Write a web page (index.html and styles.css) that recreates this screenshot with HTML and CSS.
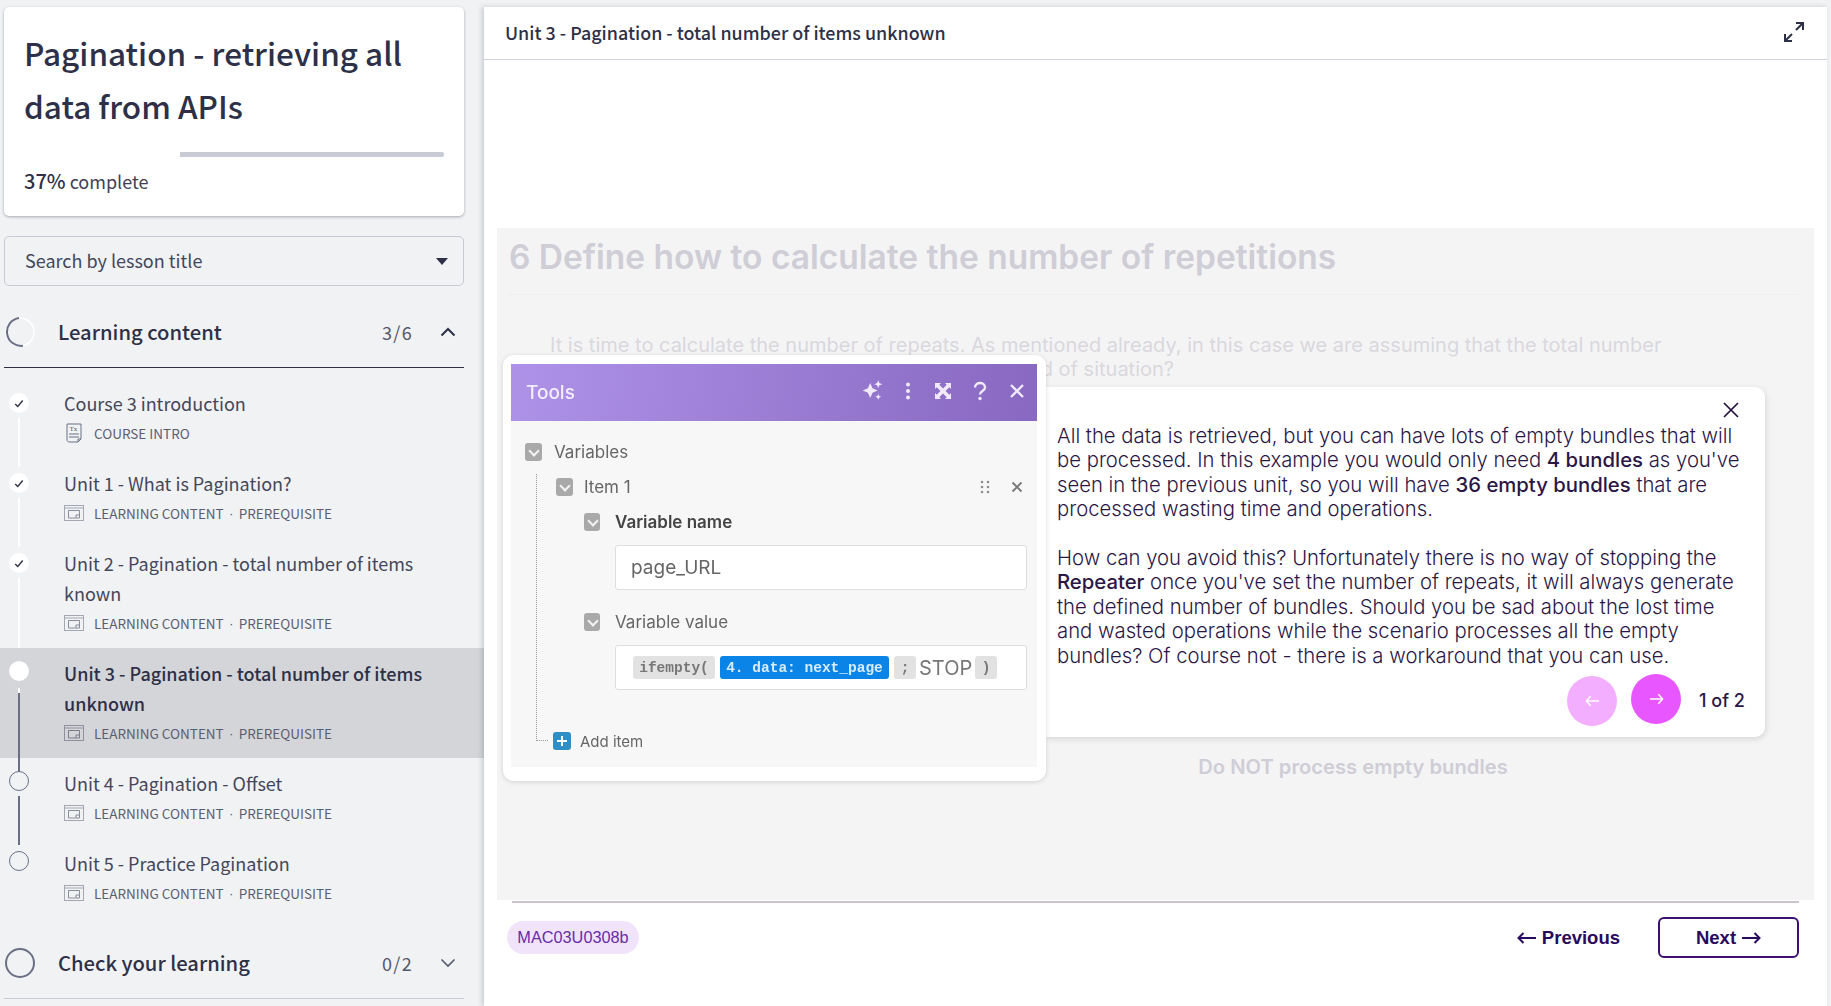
FILE: index.html
```html
<!DOCTYPE html>
<html lang="en">
<head>
<meta charset="utf-8">
<title>Pagination - retrieving all data from APIs</title>
<link rel="stylesheet" href="styles.css">
</head>
<body>
<aside class="side">
  <section class="card">
    <h1 class="card-title">Pagination - retrieving all data from APIs</h1>
    <div class="track"><div class="fill"></div></div>
    <p class="pct"><b>37%</b> complete</p>
  </section>
  <div class="search"><span>Search by lesson title</span><i class="caret"></i></div>
  <div class="sec-row sec-open">
    <svg class="ring" viewBox="0 0 30 30"><circle cx="15" cy="15" r="14" fill="none" stroke="#fff" stroke-width="1.5"/><path d="M16 1A14 14 0 1 0 16 29" transform="rotate(-8 15 15)" fill="none" stroke="#6b6f85" stroke-width="2"/></svg>
    <span class="sec-name">Learning content</span>
    <span class="sec-count">3/6</span>
    <svg class="chev" viewBox="0 0 16 10"><path d="M1.5 8.5 8 2l6.5 6.5" fill="none" stroke="#2d3047" stroke-width="2"/></svg>
  </div>
  <ul class="list">
    <li class="item done rail-w">
      <span class="dot"><svg viewBox="0 0 12 10"><path d="M1.5 5.5 4.5 8.5 10.5 1.5" fill="none" stroke="#2d3047" stroke-width="1.7"/></svg></span>
      <div class="body"><div class="name">Course 3 introduction</div>
      <div class="meta"><svg class="mi-doc" viewBox="0 0 16 20"><path d="M1 1h14v15l-3 3H2.500L1 17.500z" fill="none" stroke="#6b6f85" stroke-width="1"/><text x="3.500" y="8" class="tx">Tx</text><path d="M3 11h10M3 14h10M12 19v-3h3" fill="none" stroke="#6b6f85"/></svg>COURSE INTRO</div></div>
    </li>
    <li class="item done rail-w">
      <span class="dot"><svg viewBox="0 0 12 10"><path d="M1.5 5.5 4.5 8.5 10.5 1.5" fill="none" stroke="#2d3047" stroke-width="1.7"/></svg></span>
      <div class="body"><div class="name">Unit 1 - What is Pagination?</div>
      <div class="meta"><svg class="mi" viewBox="0 0 20 16"><rect x=".5" y=".5" width="19" height="15" fill="none" stroke="#a5a7b3"/><path d="M.5 3h19" stroke="#a5a7b3"/><path d="M4.500 5.500h11v7.500h-11zM15 10h-3v3" fill="none" stroke="#8a8c9a"/></svg>LEARNING CONTENT<em>·</em>PREREQUISITE</div></div>
    </li>
    <li class="item item-two done rail-w">
      <span class="dot"><svg viewBox="0 0 12 10"><path d="M1.5 5.5 4.5 8.5 10.5 1.5" fill="none" stroke="#2d3047" stroke-width="1.7"/></svg></span>
      <div class="body"><div class="name">Unit 2 - Pagination - total number of items known</div>
      <div class="meta"><svg class="mi" viewBox="0 0 20 16"><rect x=".5" y=".5" width="19" height="15" fill="none" stroke="#a5a7b3"/><path d="M.5 3h19" stroke="#a5a7b3"/><path d="M4.500 5.500h11v7.500h-11zM15 10h-3v3" fill="none" stroke="#8a8c9a"/></svg>LEARNING CONTENT<em>·</em>PREREQUISITE</div></div>
    </li>
    <li class="item item-two active rail-d">
      <span class="dot"></span>
      <div class="body"><div class="name">Unit 3 - Pagination - total number of items unknown</div>
      <div class="meta"><svg class="mi" viewBox="0 0 20 16"><rect x=".5" y=".5" width="19" height="15" fill="none" stroke="#8f919e"/><path d="M.5 3h19" stroke="#8f919e"/><path d="M4.500 5.500h11v7.500h-11zM15 10h-3v3" fill="none" stroke="#7a7c8a"/></svg>LEARNING CONTENT<em>·</em>PREREQUISITE</div></div>
    </li>
    <li class="item todo rail-d">
      <span class="dot"></span>
      <div class="body"><div class="name">Unit 4 - Pagination - Offset</div>
      <div class="meta"><svg class="mi" viewBox="0 0 20 16"><rect x=".5" y=".5" width="19" height="15" fill="none" stroke="#a5a7b3"/><path d="M.5 3h19" stroke="#a5a7b3"/><path d="M4.500 5.500h11v7.500h-11zM15 10h-3v3" fill="none" stroke="#8a8c9a"/></svg>LEARNING CONTENT<em>·</em>PREREQUISITE</div></div>
    </li>
    <li class="item todo">
      <span class="dot"></span>
      <div class="body"><div class="name">Unit 5 - Practice Pagination</div>
      <div class="meta"><svg class="mi" viewBox="0 0 20 16"><rect x=".5" y=".5" width="19" height="15" fill="none" stroke="#a5a7b3"/><path d="M.5 3h19" stroke="#a5a7b3"/><path d="M4.500 5.500h11v7.500h-11zM15 10h-3v3" fill="none" stroke="#8a8c9a"/></svg>LEARNING CONTENT<em>·</em>PREREQUISITE</div></div>
    </li>
  </ul>
  <div class="sec-row sec-closed">
    <svg class="ring" viewBox="0 0 30 30"><circle cx="15" cy="15" r="14" fill="none" stroke="#6b6f85" stroke-width="2"/></svg>
    <span class="sec-name">Check your learning</span>
    <span class="sec-count">0/2</span>
    <svg class="chev" viewBox="0 0 16 10"><path d="M1.5 1.500 8 8l6.500-6.500" fill="none" stroke="#555869" stroke-width="1.600"/></svg>
  </div>
</aside>
<main class="main">
  <header class="top">
    <span class="top-title">Unit 3 - Pagination - total number of items unknown</span>
    <svg class="expand" viewBox="0 0 22 22"><path d="M13 2h7v7M20 2 13 9M2 13v7h7M2 20l7-7" fill="none" stroke="#2d3047" stroke-width="2"/></svg>
  </header>
  <div class="gap"></div>
  <section class="stage">
    <h2 class="h6">6 Define how to calculate the number of repetitions</h2>
    <p class="intro">It is time to calculate the number of repeats. As mentioned already, in this case we are assuming that the total number of items is unknown, so how can you handle this kind of situation?</p>
    <div class="tools">
      <div class="tools-head">
        <span>Tools</span>
        <div class="tools-icons">
          <svg class="ti ti-spark" viewBox="0 0 20 20"><path d="M8 3.500 10 8l4.500 2L10 12l-2 4.500L6 12l-4.500-2L6 8zM15 1l1 2.500L18.500 4.500 16 5.500 15 8l-1-2.500L11.500 4.500 14 3.500zM15 13l.8 1.700 1.700.8-1.700.8L15 18l-.8-1.700-1.700-.8 1.700-.8z" fill="#f1eafa"/></svg>
          <svg class="ti ti-dots" viewBox="0 0 20 20"><circle cx="10" cy="3.500" r="2" fill="#f1eafa"/><circle cx="10" cy="10" r="2" fill="#f1eafa"/><circle cx="10" cy="16.500" r="2" fill="#f1eafa"/></svg>
          <svg class="ti" viewBox="0 0 20 20"><path d="M2 2h6L6.300 3.700 10 7.400l3.700-3.700L12 2h6v6l-1.700-1.700L12.600 10l3.700 3.700L18 12v6h-6l1.700-1.700L10 12.600l-3.700 3.700L8 18H2v-6l1.700 1.700L7.400 10 3.700 6.300 2 8z" fill="#f1eafa"/></svg>
          <svg class="ti" viewBox="0 0 20 20"><path d="M5 6.500C5 3.500 7.500 2 10 2s5 1.500 5 4.500c0 3.500-5 3.500-5 7" fill="none" stroke="#f1eafa" stroke-width="2.400"/><circle cx="10" cy="17.500" r="1.700" fill="#f1eafa"/></svg>
          <svg class="ti" viewBox="0 0 20 20"><path d="M4 4l12 12M16 4 4 16" stroke="#f1eafa" stroke-width="2.400"/></svg>
        </div>
      </div>
      <div class="tools-body">
        <div class="tree-v"></div>
        <div class="row row-vars"><i class="cb"></i>Variables</div>
        <div class="row row-item"><i class="cb"></i>Item 1
          <span class="row-end">
            <svg class="grip" viewBox="0 0 10 14"><g fill="#8d8d8d"><circle cx="2" cy="2" r="1.300"/><circle cx="8" cy="2" r="1.300"/><circle cx="2" cy="7" r="1.300"/><circle cx="8" cy="7" r="1.300"/><circle cx="2" cy="12" r="1.300"/><circle cx="8" cy="12" r="1.300"/></g></svg>
            <svg class="grip-x" viewBox="0 0 12 12"><path d="M1.500 1.500l9 9M10.500 1.500l-9 9" stroke="#777" stroke-width="1.800"/></svg>
          </span>
        </div>
        <div class="row row-name"><i class="cb"></i><b>Variable name</b></div>
        <div class="field field-name">page_URL</div>
        <div class="row row-val"><i class="cb"></i>Variable value</div>
        <div class="field field-val">
          <span class="chip chip-f">ifempty(</span><span class="chip chip-b">4. data: next_page</span><span class="chip chip-s">;</span><span class="stop">STOP</span><span class="chip chip-e">)</span>
        </div>
        <div class="row row-add"><i class="plus"></i>Add item</div>
      </div>
    </div>
    <div class="pop">
      <svg class="pop-x" viewBox="0 0 16 16"><path d="M1 1l14 14M15 1 1 15" stroke="#241040" stroke-width="1.700"/></svg>
      <p>All the data is retrieved, but you can have lots of empty bundles that will be processed. In this example you would only need <b>4 bundles</b> as you've seen in the previous unit, so you will have <b>36 empty bundles</b> that are processed wasting time and operations.</p>
      <p class="p2">How can you avoid this? Unfortunately there is no way of stopping the <b>Repeater</b> once you've set the number of repeats, it will always generate the defined number of bundles. Should you be sad about the lost time and wasted operations while the scenario processes all the empty bundles? Of course not - there is a workaround that you can use.</p>
      <div class="pop-nav">
        <span class="round round-off"><svg viewBox="0 0 16 12"><path d="M6 1 1.500 6 6 11M1.500 6H15" fill="none" stroke="#fff" stroke-width="1.600"/></svg></span>
        <span class="round round-on"><svg viewBox="0 0 16 12"><path d="M10 1l4.500 5L10 11M14.500 6H1" fill="none" stroke="#fff" stroke-width="1.600"/></svg></span>
        <span class="pager">1 of 2</span>
      </div>
    </div>
    <p class="caption">Do NOT process empty bundles</p>
  </section>
  <footer class="foot">
    <span class="code">MAC03U0308b</span>
    <div class="foot-nav">
      <span class="prev"><svg viewBox="0 0 20 12"><path d="M6.500 1 1.500 6l5 5M1.500 6H19" fill="none" stroke="#2a0a5e" stroke-width="2"/></svg>Previous</span>
      <span class="next">Next<svg viewBox="0 0 20 12"><path d="M13.500 1l5 5-5 5M18.500 6H1" fill="none" stroke="#2a0a5e" stroke-width="2"/></svg></span>
    </div>
  </footer>
</main>
</body>
</html>
```

FILE: styles.css
```css
* { box-sizing: border-box; }
html, body { margin: 0; height: 100%; }
body {
  width: 1831px; height: 1006px; overflow: hidden;
  display: flex; background: #f1f2f4; color: #2d3047;
  font-family: "Noto Sans CJK SC", "Source Sans Pro", "Noto Sans", sans-serif;
}
ul { list-style: none; margin: 0; padding: 0; }
p, h1, h2 { margin: 0; }

/* Sidebar */
.side { width: 484px; flex: none; padding-top: 7px; }
.card {
  width: 460px; height: 209px; margin-left: 4px; padding: 19px 20px 0 20px;
  background: #fff; border-radius: 5px; box-shadow: 0 1px 3px rgba(30,30,50,.35);
}
.card-title { font-size: 31.5px; line-height: 53px; font-weight: 500; color: #2d3047; }
.track { height: 5px; margin-top: 20px; margin-left: 1px; background: #c8cad4; border-radius: 2px; }
.fill { width: 37%; height: 100%; background: #fff; }
.pct { margin-top: 11px; font-size: 18px; line-height: 26px; color: #3e4154; }
.pct b { font-size: 20px; font-weight: 500; color: #2d3047; }
.search {
  width: 460px; height: 50px; margin: 20px 0 0 4px; padding: 0 12px 2px 20px;
  display: flex; align-items: center; justify-content: space-between;
  border: 1px solid #c8cad4; border-radius: 5px; font-size: 18px; color: #44475a;
}
.caret { width: 0; height: 0; border: 6px solid transparent; border-top: 7px solid #2d3047; border-bottom: 0; margin: 2px 3px 0 0; }
.sec-row {
  width: 460px; height: 71px; margin-left: 4px; display: flex; align-items: center;
  border-bottom: 1px solid #2d3047;
}
.sec-open { margin-top: 11px; }
.sec-closed { margin-top: 10px; border-bottom-color: #c8cad4; }
.ring { width: 30px; height: 30px; margin-left: 1px; }
.sec-name { margin: 0 0 0 23px; flex: 1; font-size: 20.2px; font-weight: 500; line-height: 30px; color: #2d3047; }
.sec-count { font-size: 18px; letter-spacing: 1.3px; color: #555869; }
.chev { width: 16px; height: 10px; margin: 0 8px 0 27px; }
.list { margin-top: 10px; }
.item { position: relative; height: 80px; padding: 10px 20px 0 64px; }
.item-two { height: 110px; }
.name { font-size: 18px; line-height: 30px; color: #44475a; }
.meta { height: 30px; display: flex; align-items: center; font-size: 13.5px; color: #5b5e70; }
.meta em { width: 15px; text-align: center; font-style: normal; font-family: "Liberation Sans", sans-serif; }
.mi { width: 20px; height: 16px; margin-right: 10px; }
.mi-doc { width: 16px; height: 20px; margin: 0 12px 0 2px; }
.tx { font: 7px "Liberation Serif", serif; fill: #555; }
.dot {
  position: absolute; left: 9px; top: 15px; width: 20px; height: 20px; border-radius: 50%;
  display: flex; align-items: center; justify-content: center; background: #fff;
}
.dot svg { width: 10px; height: 9px; }
.active, .todo { padding-top: 10px; }
.active .dot, .todo .dot { top: 13px; }
.todo .dot { background: #f1f2f4; border: 1px solid #6b6f85; }
.active { background: #d4d5d9; }
.active .name { font-weight: 500; color: #2d3047; }
.item::after { content: ""; position: absolute; left: 18px; width: 2px; }
.rail-w::after { top: 40px; height: 49px; background: #fff; }
.item-two.rail-w::after { height: 79px; }
.rail-d::after { top: 38px; height: 49px; background: #6b6f85; }
.item-two.rail-d::after { top: 40px; height: 79px; border-top: 5px solid #fff; }

/* Main */
.main {
  width: 1343px; height: 999px; margin-top: 7px; position: relative;
  background: #fff; display: flex; flex-direction: column;
  box-shadow: -2px 0 5px rgba(30,30,50,.18);
}
.top {
  height: 53px; flex: none; padding: 0 22px 2px 21px;
  display: flex; align-items: center; justify-content: space-between;
  border-bottom: 1px solid #cfd0d8;
}
.top-title { font-size: 17.9px; font-weight: 500; color: #2d3047; }
.expand { width: 22px; height: 22px; }
.gap { height: 168px; flex: none; }
.stage { position: relative; height: 672px; flex: none; margin: 0 13px; background: #f4f4f5; padding: 0 15px; font-family: Inter, sans-serif; }
.h6 {
  height: 67px; padding: 10px 0 0 0; margin-left: -3px; border-bottom: 1px solid #eeeeef;
  font-size: 33.5px; line-height: 38px; font-weight: 600; color: #cfcdd6; white-space: nowrap;
}
.intro { width: 1125px; margin: 38px 0 0 38px; font-size: 20px; line-height: 24px; color: #d9d8dd; }
.caption { position: absolute; left: 696px; top: 526px; width: 320px; text-align: center; font-size: 20.2px; font-weight: 600; color: #cfcdd6; white-space: nowrap; }

/* Tools picture */
.tools {
  position: absolute; left: 6px; top: 127px; width: 543px; height: 426px; padding: 9px 9px 14px 8px; z-index: 2;
  background: #fff; border-radius: 11px; box-shadow: 0 1px 5px rgba(0,0,0,.14); filter: blur(.3px);
}
.tools-head {
  height: 57px; padding: 0 10px 0 15px; display: flex; align-items: center; justify-content: space-between;
  background: linear-gradient(100deg, #ae92e8, #8868c0); color: #f3eefb; font-size: 19px; font-weight: 500;
}
.tools-icons { display: flex; gap: 17px; align-items: center; margin-bottom: 4px; }
.ti { width: 20px; height: 20px; }
.ti-spark { width: 23px; height: 23px; margin-right: -3px; }
.ti-dots { margin-right: -2px; }
.tools-body { position: relative; height: 346px; padding: 19px 0 0 14px; background: #f7f7f7; color: #666; font-size: 17px; }
.tree-v { position: absolute; left: 25px; top: 53px; width: 12px; height: 267px; border-left: 1px dotted #999; border-bottom: 1px dotted #999; }
.row { display: flex; align-items: center; height: 24px; }
.cb {
  position: relative; width: 17px; height: 18px; margin-right: 12px; flex: none; background: #a9a9a9; border-radius: 3px;
}
.cb::after { content: ""; position: absolute; left: 5px; top: 4px; width: 6px; height: 6px; border: solid #f3f3f3; border-width: 0 2px 2px 0; transform: rotate(45deg); }
.row-item { margin: 11px 0 0 31px; padding-right: 14px; }
.row-item .cb { margin-right: 11px; }
.row-end { margin-left: auto; display: flex; align-items: center; gap: 21px; }
.grip { width: 10px; height: 14px; }
.grip-x { width: 12px; height: 12px; }
.row-name { margin: 11px 0 0 59px; }
.row-val { margin: 20px 0 0 59px; }
.row-name .cb, .row-val .cb { width: 16px; margin-right: 15px; }
.row-name b { color: #444; font-weight: 600; }
.field {
  width: 412px; height: 45px; margin: 11px 0 0 90px; display: flex; align-items: center;
  background: #fff; border: 1px solid #dedede; border-radius: 3px;
}
.field-name { padding-left: 15px; font-size: 19px; color: #666; }
.field-val { padding-left: 17px; font-family: "Liberation Mono", monospace; }
.chip { height: 23px; display: flex; align-items: center; justify-content: center; border-radius: 3px; background: #e2e2e2; color: #777; font-size: 14.5px; font-weight: 700; }
.chip-f { width: 82px; }
.chip-b { width: 169px; margin: 0 5px; background: #0a84e6; color: #d8ecff; }
.chip-s { width: 22px; }
.stop { margin-left: 3px; font: 20px Inter, sans-serif; color: #777; }
.chip-e { width: 22px; margin-left: 3px; }
.row-add { position: absolute; left: 42px; top: 308px; font-size: 15px; }
.plus { position: relative; width: 18px; height: 18px; margin-right: 9px; background: #2f8fc4; border-radius: 3px; }
.plus::before, .plus::after { content: ""; position: absolute; background: #fff; }
.plus::before { left: 4px; top: 8px; width: 10px; height: 2px; }
.plus::after { left: 8px; top: 4px; width: 2px; height: 10px; }

/* Popup */
.pop {
  position: absolute; left: 549px; top: 159px; width: 719px; height: 350px; padding: 37px 22px 0 11px; z-index: 1;
  background: #fff; border-radius: 0 10px 10px 0; box-shadow: 1px 2px 6px rgba(0,0,0,.12);
  font-size: 20.3px; line-height: 24.4px; font-weight: 300; color: #2b1646;
}
.pop b { font-weight: 500; }
.p2 { margin-top: 24.4px; }
.pop-x { position: absolute; right: 26px; top: 15px; width: 16px; height: 16px; }
.pop-nav { position: absolute; left: 521px; top: 285px; display: flex; align-items: center; }
.round { width: 50px; height: 50px; border-radius: 50%; display: flex; align-items: center; justify-content: center; }
.round svg { width: 15px; height: 12px; }
.round-off { background: #f4aeff; margin-top: 4px; }
.round-on { background: #e856ff; margin-left: 14px; }
.pager { margin: 4px 0 0 18px; font-size: 18px; font-weight: 500; color: #2b1646; }

/* Footer */
.foot {
  flex: 1; margin: 1px 28px 0 28px; border-top: 2px solid #c9c5ca; position: relative;
  display: flex; justify-content: space-between; align-items: flex-start;
  font-family: "Liberation Sans", sans-serif;
}
.code {
  margin: 18px 0 0 -5px; width: 132px; height: 33px; display: flex; align-items: center; justify-content: center;
  background: #f0e3fa; border-radius: 17px; color: #6a2ca8; font-size: 16.3px;
}
.foot-nav { display: flex; align-items: center; margin-top: 14px; }
.prev, .next { display: flex; align-items: center; gap: 5px; font-size: 18.5px; font-weight: 700; color: #2a0a5e; }
.prev svg, .next svg { width: 20px; height: 12px; }
.next { width: 141px; height: 41px; margin-left: 38px; justify-content: center; border: 2px solid #3c1070; border-radius: 6px; }
```
